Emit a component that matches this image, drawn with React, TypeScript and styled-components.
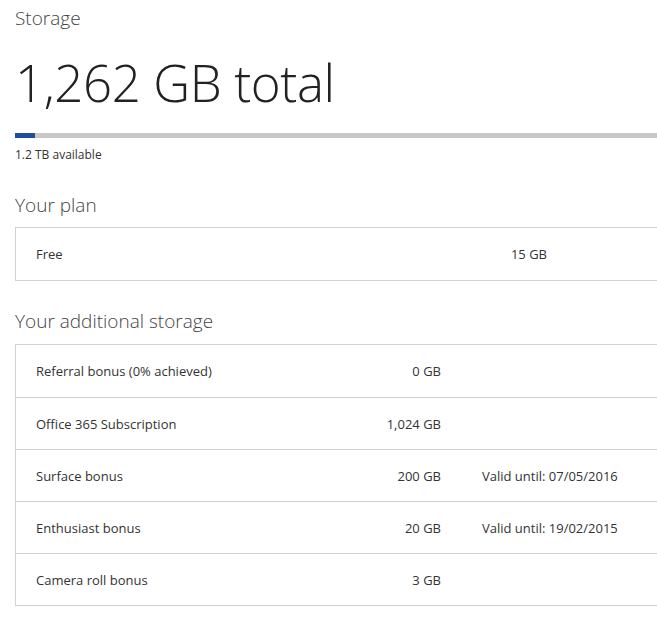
import React from "react";
import styled, { createGlobalStyle } from "styled-components";

const Global = createGlobalStyle`
  html, body { margin: 0; padding: 0; background: #fff; overflow: hidden; }
  body { font-family: "Open Sans", "Liberation Sans", sans-serif; color: #333; }
`;

const Page = styled.div`
  width: 100%;
  padding: 5px 0 0 15px;
  box-sizing: border-box;
`;

const Title = styled.h1`
  margin: 0;
  font-size: 19px;
  line-height: 26px;
  font-weight: 300;
  color: #444;
`;

const Total = styled.div`
  margin-top: 21px;
  font-size: 51px;
  line-height: 60px;
  font-weight: 300;
  color: #222;
  letter-spacing: -0.4px;
`;

const Bar = styled.div`
  margin-top: 21px;
  height: 5px;
  background: #c8c8c8;
  display: flex;
`;

const BarFill = styled.div`
  height: 100%;
  background: #1f4e9c;
`;

const Available = styled.div`
  margin-top: 9px;
  font-size: 12px;
  line-height: 16px;
  color: #333;
`;

const SectionTitle = styled.h2<{ $top: number }>`
  margin: ${(p) => p.$top}px 0 0;
  font-size: 19px;
  line-height: 26px;
  font-weight: 300;
  color: #444;
`;

const Table = styled.div<{ $top: number }>`
  margin-top: ${(p) => p.$top}px;
  border: 1px solid #d2d2d2;
  border-right: none;
  border-bottom: none;
`;

const Row = styled.div<{ $cols: string }>`
  display: grid;
  grid-template-columns: ${(p) => p.$cols};
  align-items: center;
  height: 51px;
  padding-left: 20px;
  border-bottom: 1px solid #d2d2d2;
  font-size: 13px;
  color: #333;
  &:first-child {
    height: 52px;
  }
`;

const Label = styled.span``;

const Amount = styled.span`
  text-align: right;
`;

const Note = styled.span`
  padding-left: 41px;
`;

type Item = { label: string; amount: string; note?: string };

const additional: Item[] = [
  { label: "Referral bonus (0% achieved)", amount: "0 GB" },
  { label: "Office 365 Subscription", amount: "1,024 GB" },
  { label: "Surface bonus", amount: "200 GB", note: "Valid until: 07/05/2016" },
  { label: "Enthusiast bonus", amount: "20 GB", note: "Valid until: 19/02/2015" },
  { label: "Camera roll bonus", amount: "3 GB" },
];

export default function App() {
  const used = 20 / 642;
  return (
    <Page>
      <Global />
      <Title>Storage</Title>
      <Total>1,262 GB total</Total>
      <Bar>
        <BarFill style={{ width: `${used * 100}%` }} />
      </Bar>
      <Available>1.2 TB available</Available>

      <SectionTitle $top={29}>Your plan</SectionTitle>
      <Table $top={9}>
        <Row $cols="366px 145px 1fr">
          <Label>Free</Label>
          <Amount>15 GB</Amount>
          <span />
        </Row>
      </Table>

      <SectionTitle $top={27}>Your additional storage</SectionTitle>
      <Table $top={10}>
        {additional.map((it) => (
          <Row key={it.label} $cols="260px 145px 1fr">
            <Label>{it.label}</Label>
            <Amount>{it.amount}</Amount>
            <Note>{it.note ?? ""}</Note>
          </Row>
        ))}
      </Table>
    </Page>
  );
}
